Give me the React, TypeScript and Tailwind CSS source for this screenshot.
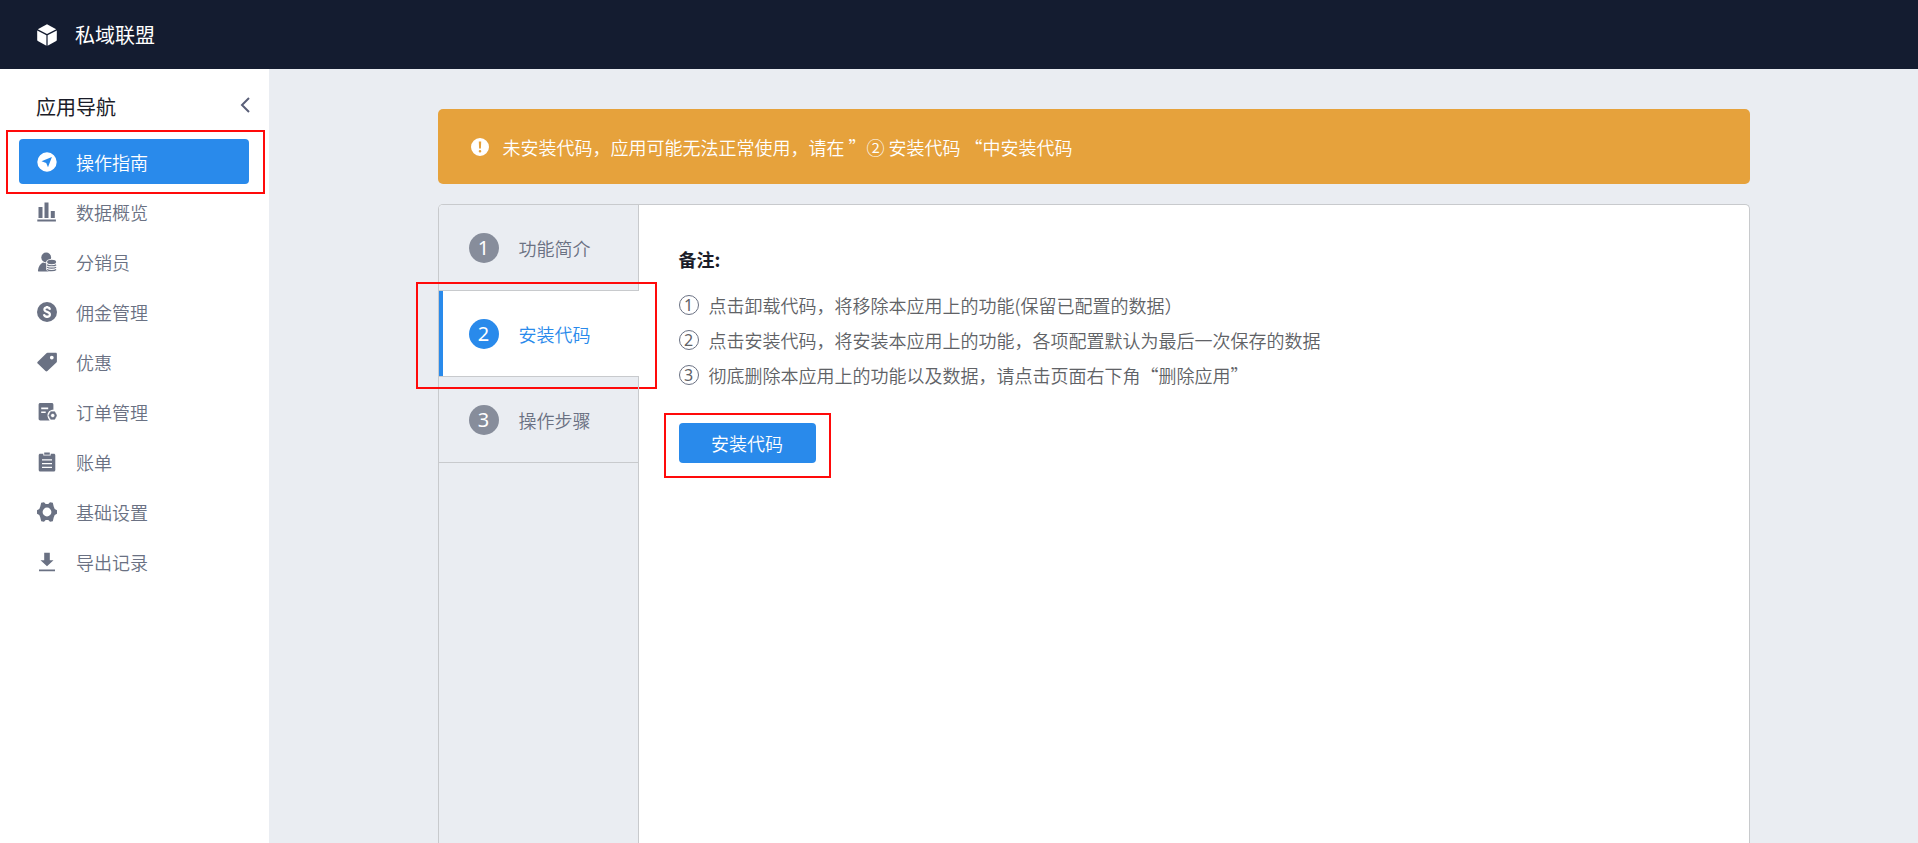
import React from "react";

type HighlightProps = { className: string };

const Svg = ({ children }: { children: React.ReactNode }) => (
  <svg viewBox="0 0 20 20" className="size-5 shrink-0" fill="currentColor" aria-hidden="true">
    {children}
  </svg>
);

const CubeIcon = () => (
  <svg viewBox="0 0 20 22" className="h-[22px] w-5 shrink-0" fill="currentColor" aria-hidden="true">
    <path d="M10 .3 19.200 5.300 10 10 .800 5.300Z" />
    <path d="M.2 6.500 9.400 11.300V21.700L.800 17Q.2 16.600.2 16Z" />
    <path d="M19.800 6.500 10.600 11.300V21.700L19.200 17Q19.800 16.600 19.800 16Z" />
  </svg>
);

const CompassIcon = () => (
  <Svg>
    <path fillRule="evenodd" d="M10 .3a9.7 9.7 0 1 0 0 19.4A9.7 9.7 0 0 0 10 .3ZM14.9 5.1 11 15.2 9.2 10.9 4.5 9.3Z" />
  </Svg>
);

const ChartIcon = () => (
  <Svg>
    <path d="M1.5 5h4v11h-4zM7.5.5h4V16h-4zM13.8 9h4v7h-4zM.3 17.6h18.6v2H.3z" />
  </Svg>
);

const AgentIcon = () => (
  <Svg>
    <circle cx="9.200" cy="5.500" r="4.900" />
    <path d="M6 10.500c2 1 4.400 1 6.400 0L14 19.500H2c-.9 0-1.200-.6-1-1.300.4-3.400 2.200-6.600 5-7.700Z" />
    <path d="M9.200 10c0-3.900 10.800-3.900 10.800 0v7.300c0 3.400-10.800 3.400-10.800 0Z" fill="#fff" />
    <ellipse cx="14.600" cy="10" rx="4.500" ry="2.200" />
    <path
      d="M10.100 12.700c1.500 1.400 7.500 1.400 9 0M10.100 15.100c1.500 1.400 7.500 1.400 9 0M10.100 17.500c1.500 1.400 7.500 1.400 9 0"
      fill="none"
      stroke="currentColor"
      strokeWidth="1.200"
    />
  </Svg>
);

const CoinIcon = () => (
  <Svg>
    <circle cx="10" cy="10" r="10" />
    <path
      d="M13 7.700C12.700 6.200 11.600 5.400 10.100 5.400c-1.600 0-2.700.8-2.700 2.100 0 2.900 5.500 1.900 5.500 4.900 0 1.400-1.200 2.300-2.900 2.300-1.700 0-2.800-.9-3.100-2.500"
      fill="none"
      stroke="#fff"
      strokeWidth="2.200"
    />
    <path d="M9.100 4h1.900v1.500H9.100zM9.100 14.600h1.900v1.500H9.100z" fill="#fff" />
  </Svg>
);

const TagIcon = () => (
  <Svg>
    <path
      fillRule="evenodd"
      d="M10.500.8h8.200c.7 0 1.200.5 1.200 1.200v7.200c0 .5-.1.900-.5 1.200l-9 8.700c-.6.600-1.300.600-1.900 0L.7 11.600c-.6-.6-.6-1.300 0-1.900l8.500-8.300c.4-.4.800-.6 1.300-.6ZM14.800 3.700a1.900 1.900 0 1 0 0 3.800 1.900 1.900 0 0 0 0-3.800Z"
    />
  </Svg>
);

const OrderIcon = () => (
  <Svg>
    <path
      fillRule="evenodd"
      d="M3.300 1h11.400c1 0 1.700.7 1.700 1.700v5c-3.400-.1-5.900 2.400-5.900 5.600 0 2 .8 3.900 2.200 5.200H3.300c-1 0-1.700-.7-1.700-1.700V2.700c0-1 .7-1.700 1.700-1.700ZM4.200 5.600v1.600h7V5.600ZM4.200 9.500v1.600h4.500V9.500Z"
    />
    <path
      fillRule="evenodd"
      d="M13.700 9.700h4l2 3.800-2 3.800h-4l-2-3.800ZM15.700 11.400a2.100 2.100 0 1 0 0 4.200 2.100 2.100 0 0 0 0-4.200Z"
      stroke="currentColor"
      strokeWidth="0.600"
      strokeLinejoin="round"
    />
  </Svg>
);

const BillIcon = () => (
  <Svg>
    <path
      fillRule="evenodd"
      d="M3.200 1.800h3.100v1.700h7.400V1.800h3.100c.9 0 1.500.6 1.500 1.500v14.800c0 .9-.6 1.500-1.500 1.500H3.200c-.9 0-1.500-.6-1.500-1.500V3.300c0-.9.6-1.500 1.500-1.500ZM5 7.300v1.300h10V7.300ZM5 11v1.300h10V11ZM5 14.700V16h10v-1.300Z"
    />
    <path d="M7.200.5h5.600v2.200H7.200z" />
  </Svg>
);

const GearIcon = () => (
  <Svg>
    <path
      fillRule="evenodd"
      d="M4.200.8 7 .2 8.700 2h2.600L13 .2l2.800.6.9 3.800 1 2.500 2.300 1.200v3.400l-2.300 1.200-1 2.500-.9 3.800-2.800.6-1.700-1.800H8.700L7 19.800l-2.800-.6-.9-3.800-1-2.500L0 11.700V8.300l2.300-1.200 1-2.500ZM10 5.600a4.400 4.400 0 1 0 0 8.800 4.400 4.400 0 0 0 0-8.800Z"
    />
  </Svg>
);

const DownloadIcon = () => (
  <Svg>
    <path d="M7.200.8h5.600v7.400h3.700L10 14.200 3.500 8.200h3.700zM2 17.400h16v1.900H2z" />
  </Svg>
);

const Highlight = ({ className }: HighlightProps) => (
  <span aria-hidden="true" className={`pointer-events-none absolute border-2 border-[#ff0a0a] ${className}`} />
);

const navItems = [
  { label: "操作指南", Icon: CompassIcon, active: true },
  { label: "数据概览", Icon: ChartIcon },
  { label: "分销员", Icon: AgentIcon },
  { label: "佣金管理", Icon: CoinIcon },
  { label: "优惠", Icon: TagIcon },
  { label: "订单管理", Icon: OrderIcon },
  { label: "账单", Icon: BillIcon },
  { label: "基础设置", Icon: GearIcon },
  { label: "导出记录", Icon: DownloadIcon },
];

const steps = [
  { label: "功能简介" },
  { label: "安装代码", active: true },
  { label: "操作步骤" },
];

const notes = [
  "点击卸载代码，将移除本应用上的功能(保留已配置的数据）",
  "点击安装代码，将安装本应用上的功能，各项配置默认为最后一次保存的数据",
  "彻底删除本应用上的功能以及数据，请点击页面右下角“删除应用”",
];

export default function App() {
  return (
    <div
      lang="zh-CN"
      className="flex h-screen flex-col overflow-hidden bg-[#eaedf2] font-['Noto_Sans_CJK_SC',sans-serif] text-lg font-[350]"
    >
      <header className="flex h-[69px] shrink-0 items-center gap-[18px] bg-[#141c30] pl-[37px] text-white">
        <CubeIcon />
        <span className="text-xl font-normal">私域联盟</span>
      </header>

      <div className="flex min-h-0 flex-1">
        <aside className="w-[269px] shrink-0 bg-white">
          <div className="flex h-[70px] items-center justify-between pt-[6px] pr-[18px] pl-9">
            <h2 className="text-xl font-normal text-[#1a1c28]">应用导航</h2>
            <button type="button" aria-label="收起导航" className="pb-1 text-[#5a5f78]">
              <svg viewBox="0 0 12 16" className="h-4 w-3" fill="none" stroke="currentColor" strokeWidth="2">
                <path d="M10 1 3 8l7 7" />
              </svg>
            </button>
          </div>
          <nav className="flex flex-col gap-[5px] pr-5 pl-[19px]">
            {navItems.map(({ label, Icon, active }) => (
              <a
                key={label}
                href="#"
                aria-current={active ? "page" : undefined}
                className={`relative flex h-[45px] items-center gap-[19px] rounded pl-[18px] ${
                  active ? "bg-[#298aeb] text-white" : "text-[#6a7183]"
                }`}
              >
                <Icon />
                {label}
                {active && <Highlight className="-top-[9px] -right-[16px] -bottom-[10px] -left-[13px]" />}
              </a>
            ))}
          </nav>
        </aside>

        <main className="flex min-w-0 flex-1 flex-col px-6 pt-10">
          <div className="mx-auto flex min-h-0 w-full max-w-[1312px] flex-1 flex-col gap-5">
            <div
              role="alert"
              className="flex h-[75px] shrink-0 items-center gap-[14px] rounded-[5px] bg-[#e6a23c] pl-[33px] text-white"
            >
              <svg viewBox="0 0 18 18" className="size-[18px] shrink-0" fill="currentColor" aria-hidden="true">
                <path
                  fillRule="evenodd"
                  d="M9 0a9 9 0 1 0 0 18A9 9 0 0 0 9 0ZM7.800 3.600h2.400L9.900 10.600H8.100ZM9 12a1.300 1.300 0 1 1 0 2.600A1.300 1.300 0 0 1 9 12Z"
                />
              </svg>
              <p>未安装代码，应用可能无法正常使用，请在 ”② 安装代码 “中安装代码</p>
            </div>

            <section className="flex min-h-0 flex-1 rounded-t-[5px] border border-b-0 border-[#c8cacd] bg-white">
              <div className="flex w-[200px] shrink-0 flex-col rounded-tl-[4px] bg-[#eaedf2]">
                {steps.map(({ label, active }, i) => (
                  <button
                    key={label}
                    type="button"
                    className={`relative flex h-[86px] items-center gap-5 border-b border-[#c8cacd] ${
                      active
                        ? "bg-white pl-[30px] text-[#298aeb] before:absolute before:inset-y-0 before:left-0 before:w-1 before:bg-[#298aeb]"
                        : "border-r pl-[30px] text-[#6a7183]"
                    }`}
                  >
                    <span
                      className={`flex size-[30px] items-center justify-center rounded-full font-['Noto_Sans',sans-serif] text-xl font-normal text-white ${
                        active ? "bg-[#298aeb]" : "bg-[#878d9b]"
                      }`}
                    >
                      {i + 1}
                    </span>
                    {label}
                    {active && <Highlight className="-top-[9px] -right-[18px] -bottom-[13px] -left-[23px]" />}
                  </button>
                ))}
                <div className="flex-1 border-r border-[#c8cacd]" />
              </div>

              <div className="flex flex-col items-start px-10 pt-[39px]">
                <h3 className="text-lg leading-[30px] font-bold text-[#1a1c28]">备注:</h3>
                <ol className="mt-[13px] text-[#606266]">
                  {notes.map((note, i) => (
                    <li key={note} className="flex h-[35px] items-center gap-[10px]">
                      <span className="flex size-5 items-center justify-center rounded-full border border-[#6a7183] font-['Noto_Sans',sans-serif] text-base font-normal">
                        {i + 1}
                      </span>
                      {note}
                    </li>
                  ))}
                </ol>
                <button
                  type="button"
                  className="relative mt-[31px] h-10 w-[137px] rounded-[4px] bg-[#298aeb] text-white"
                >
                  安装代码
                  <Highlight className="-top-[10px] -right-[15px] -bottom-[15px] -left-[15px]" />
                </button>
              </div>
            </section>
          </div>
        </main>
      </div>
    </div>
  );
}
